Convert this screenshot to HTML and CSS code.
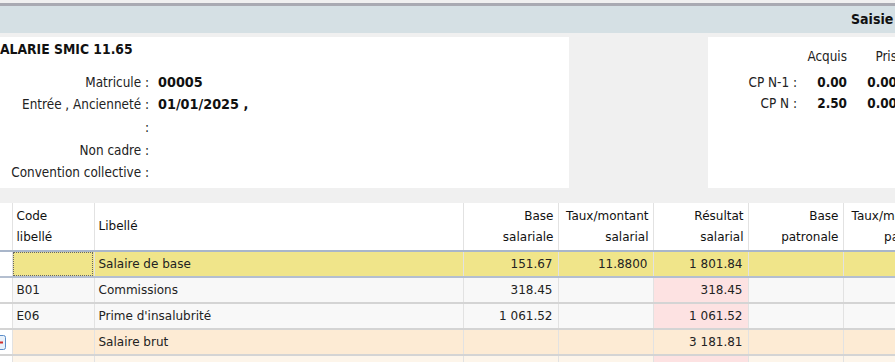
FILE: index.html
```html
<!DOCTYPE html>
<html lang="fr">
<head>
<meta charset="UTF-8">
<title>Saisie des variables</title>
<link rel="stylesheet" href="styles.css">
</head>
<body>
<div class="screen">
  <div class="titlebar"><span class="title">Saisie des variables</span></div>

  <div class="info">
    <div class="card emp">
      <div class="emp-name">SALARIE SMIC 11.65</div>
      <div class="fields">
        <div class="lbl">Matricule :</div><div class="val">00005</div>
        <div class="lbl">Entrée , Ancienneté :</div><div class="val">01/01/2025 ,</div>
        <div class="lbl">:</div><div class="val"></div>
        <div class="lbl">Non cadre :</div><div class="val"></div>
        <div class="lbl">Convention collective :</div><div class="val"></div>
      </div>
    </div>
    <div class="gap"></div>
    <div class="card cp">
      <div class="cp-grid">
        <div></div><div class="hd">Acquis</div><div class="hd">Pris</div>
        <div class="lbl">CP N-1 :</div><div class="num">0.00</div><div class="num">0.00</div>
        <div class="lbl">CP N :</div><div class="num">2.50</div><div class="num">0.00</div>
      </div>
    </div>
  </div>

  <table class="grid">
    <colgroup>
      <col class="c-sel">
      <col class="c-code">
      <col class="c-lib">
      <col class="c-num">
      <col class="c-num">
      <col class="c-num">
      <col class="c-num">
      <col class="c-num">
    </colgroup>
    <thead>
      <tr>
        <th></th>
        <th class="l">Code<br>libellé</th>
        <th class="l">Libellé</th>
        <th>Base<br>salariale</th>
        <th>Taux/montant<br>salarial</th>
        <th>Résultat<br>salarial</th>
        <th>Base<br>patronale</th>
        <th>Taux/montant<br>patronal</th>
      </tr>
    </thead>
    <tbody>
      <tr class="base">
        <td class="sel"></td>
        <td class="focus"></td>
        <td>Salaire de base</td>
        <td class="n">151.67</td>
        <td class="n">11.8800</td>
        <td class="n">1 801.84</td>
        <td class="n"></td>
        <td class="n"></td>
      </tr>
      <tr>
        <td class="sel"></td>
        <td>B01</td>
        <td>Commissions</td>
        <td class="n">318.45</td>
        <td class="n"></td>
        <td class="n res">318.45</td>
        <td class="n"></td>
        <td class="n"></td>
      </tr>
      <tr>
        <td class="sel"></td>
        <td>E06</td>
        <td>Prime d'insalubrité</td>
        <td class="n">1 061.52</td>
        <td class="n"></td>
        <td class="n res">1 061.52</td>
        <td class="n"></td>
        <td class="n"></td>
      </tr>
      <tr class="brut">
        <td class="sel"><span class="toggle"><svg width="14" height="15" viewBox="0 0 14 15"><rect x="0.5" y="0.5" width="13" height="14" rx="2" fill="#e9f1fa" stroke="#5b8cc8"/><rect x="3" y="6.5" width="8" height="2" fill="#d0302c"/></svg></span></td>
        <td></td>
        <td>Salaire brut</td>
        <td class="n"></td>
        <td class="n"></td>
        <td class="n">3 181.81</td>
        <td class="n"></td>
        <td class="n"></td>
      </tr>
      <tr class="next">
        <td class="sel"></td>
        <td></td>
        <td>Cotisations salariales et patronales</td>
        <td class="n"></td>
        <td class="n"></td>
        <td class="n res"></td>
        <td class="n"></td>
        <td class="n"></td>
      </tr>
    </tbody>
  </table>
</div>
</body>
</html>
```

FILE: styles.css
```css
html, body
{
margin: 0;
padding: 0;
background-color: #f0f0f0;
overflow: hidden;
}

.screen
{
width: 1100px;
font-family: "DejaVu Sans Condensed", "DejaVu Sans", sans-serif;
color: #222;
}

/* top title band */
.titlebar
{
margin-top: 3px;
border-top: 3px solid #a9aab2;
background-color: #d5e0e4;
height: 27px;
padding-left: 851px;
white-space: nowrap;
}
.title
{
font-weight: bold;
font-size: 14px;
line-height: 27px;
color: #111;
}

/* info panels */
.info
{
display: grid;
grid-template-columns: 569px 139px 1fr;
margin-top: 4px;
height: 151px;
}
.card
{
background-color: #fff;
}
.gap
{
background-color: #f0f0f0;
}

.emp-name
{
font-weight: bold;
font-size: 13.8px;
margin: 4px 0 0 -9px;
line-height: 16px;
color: #111;
}
.fields
{
display: grid;
grid-template-columns: 149px 1fr;
grid-template-rows: 22px 22px 24px 22px 22px;
margin-top: 14px;
font-size: 13.4px;
align-items: center;
}
.fields .lbl
{
text-align: right;
}
.fields .val
{
padding-left: 9px;
font-weight: bold;
font-size: 14.3px;
color: #111;
}

.cp-grid
{
display: grid;
grid-template-columns: 89px 50px 50px;
grid-template-rows: 24px 28px 14px;
margin-top: 7px;
font-size: 13.4px;
align-items: center;
}
.cp-grid .lbl,
.cp-grid .hd,
.cp-grid .num
{
text-align: right;
}
.cp-grid .num
{
font-weight: bold;
color: #111;
}

/* data grid */
.grid
{
margin-top: 15px;
border-collapse: collapse;
table-layout: fixed;
width: 913px;
font-family: "DejaVu Sans", sans-serif;
font-size: 12px;
color: #222;
}
.c-sel { width: 12px; }
.c-code { width: 82px; }
.c-lib { width: 369px; }
.c-num { width: 95px; }

.grid th
{
background-color: #fff;
font-weight: normal;
text-align: right;
vertical-align: middle;
line-height: 21px;
height: 47px;
padding: 0 4px 0 3px;
border-left: 1px solid #e2e2e2;
border-bottom: 2px solid #a9b6ca;
white-space: nowrap;
overflow: visible;
color: #111;
}
.grid th.l
{
text-align: left;
padding-left: 4px;
}
.grid th:first-child
{
border-left: none;
}

.grid td
{
height: 24px;
padding: 0 5px 0 4px;
background-color: #f8f8f8;
border-left: 1px solid #e2e2e2;
border-bottom: 2px solid #d4d4d4;
white-space: nowrap;
overflow: hidden;
}
.grid td.n
{
text-align: right;
}
.grid td.sel
{
background-color: #fff;
border-left: none;
padding: 0;
}
.grid td.res
{
background-color: #fde2e2;
}

.grid tr.base td
{
background-color: #f0e58a;
border-bottom: 2px solid #b4bfd0;
}
.grid tr.base td.sel
{
background-color: #fff;
}
.grid td.focus
{
outline: 1px dotted #666;
outline-offset: -2px;
}

.grid tr.brut td
{
background-color: #fdebd4;
}
.grid tr.brut td.sel
{
background-color: #fff;
}
.toggle
{
display: block;
margin-left: -8px;
}
.toggle svg
{
display: block;
}

.grid tr.next td
{
background-color: #fdf5ea;
}
.grid tr.next td.res
{
background-color: #fde2e2;
}
.grid tr.next td.sel
{
background-color: #fff;
}
```
